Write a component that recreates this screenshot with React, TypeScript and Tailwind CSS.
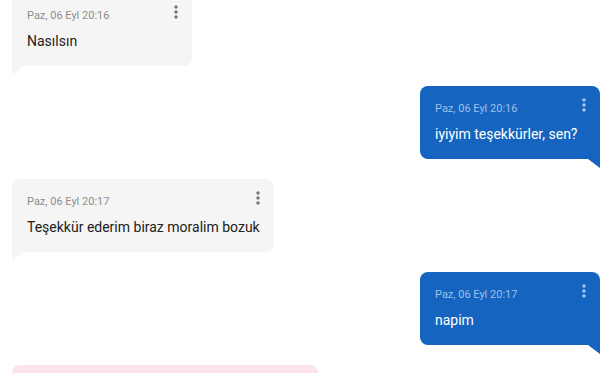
import React from 'react';

type Msg = { id: number; time: string; text: string; mine: boolean };

const messages: Msg[] = [
  { id: 1, time: 'Paz, 06 Eyl 20:16', text: 'Nasılsın', mine: false },
  { id: 2, time: 'Paz, 06 Eyl 20:16', text: 'iyiyim teşekkürler, sen?', mine: true },
  { id: 3, time: 'Paz, 06 Eyl 20:17', text: 'Teşekkür ederim biraz moralim bozuk', mine: false },
  { id: 4, time: 'Paz, 06 Eyl 20:17', text: 'napim', mine: true },
];

function MoreVert({ className }: { className?: string }) {
  return (
    <svg viewBox="0 0 24 24" className={className} fill="currentColor">
      <path d="M12 8c1.1 0 2-.9 2-2s-.9-2-2-2-2 .9-2 2 .9 2 2 2zm0 2c-1.1 0-2 .9-2 2s.9 2 2 2 2-.9 2-2-.9-2-2-2zm0 6c-1.1 0-2 .9-2 2s.9 2 2 2 2-.9 2-2-.9-2-2-2z" />
    </svg>
  );
}

function Bubble({ msg }: { msg: Msg }) {
  const mine = msg.mine;
  return (
    <div className={`flex flex-col ${mine ? 'items-end' : 'items-start'}`}>
      <div
        className={`min-w-[180px] pl-[15px] pr-[6px] pt-[9px] pb-[15px] ${
          mine ? 'bg-[#1565c0] rounded-t-lg rounded-bl-lg' : 'bg-[#f5f5f5] rounded-t-lg rounded-br-lg'
        }`}
      >
        <div className="flex items-start justify-between gap-4">
          <span className={`mt-[6px] text-[11px] leading-4 ${mine ? 'text-[#9fbfe8]' : 'text-[#8e8e8e]'}`}>
            {msg.time}
          </span>
          <button className={`h-5 w-5 ${mine ? 'text-[#a9c6ee]' : 'text-[#757575]'}`}>
            <MoreVert className="h-5 w-5" />
          </button>
        </div>
        <p className={`mt-[7px] pr-2 text-[14px] leading-5 ${mine ? 'text-white' : 'text-[#212121]'}`}>
          {msg.text}
        </p>
      </div>
      <div
        className={`h-[9px] w-[12px] ${
          mine
            ? 'bg-[#1565c0] [clip-path:polygon(0_0,100%_0,100%_100%)]'
            : 'bg-[#f5f5f5] [clip-path:polygon(0_0,100%_0,0_100%)]'
        }`}
      />
    </div>
  );
}

export default function App() {
  return (
    <div className="h-[373px] w-[610px] overflow-hidden bg-white font-['Roboto',sans-serif]">
      <div className="-mt-[7px] flex flex-col gap-[11px] pl-3 pr-[10px]">
        {messages.map((m) => (
          <Bubble key={m.id} msg={m} />
        ))}
        <div className="flex flex-col items-start">
          <div className="h-[73px] w-[306px] rounded-t-lg rounded-br-lg bg-[#fce4ec]" />
        </div>
      </div>
    </div>
  );
}
